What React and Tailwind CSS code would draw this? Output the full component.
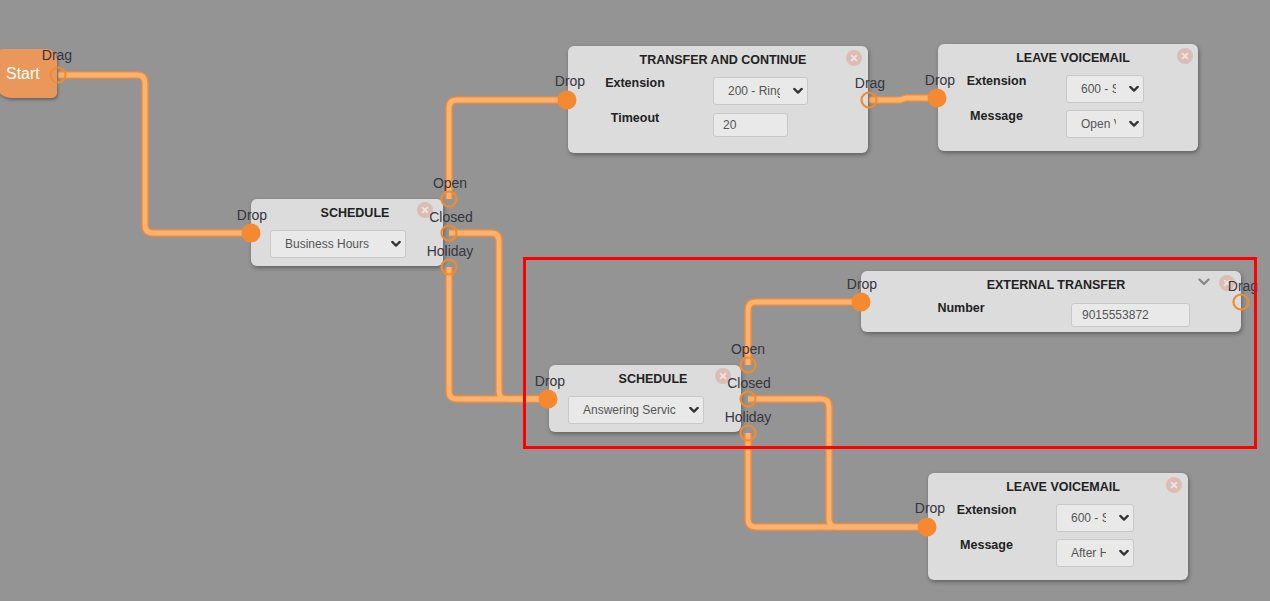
import React from "react";

function Chevron() {
  return (
    <svg className="absolute right-[4px] top-1/2 -translate-y-1/2" width="10" height="7" viewBox="0 0 10 7">
      <path d="M1.3 1.4L5 5.1L8.7 1.4" fill="none" stroke="#333" strokeWidth="2.2" strokeLinecap="round" strokeLinejoin="round" />
    </svg>
  );
}

function Select({ text, cls }) {
  return (
    <div className={"relative h-[28px] bg-[#e9e9e9] border border-[#c8c8c8] rounded-[3px] text-[12px] text-[#555] flex items-center " + cls}>
      <div className="flex-1 min-w-0 mr-[27px] overflow-hidden whitespace-nowrap pl-[14px] leading-[14px]">{text}</div>
      <Chevron />
    </div>
  );
}

function Input({ text, cls }) {
  return (
    <div className={"bg-[#e9e9e9] border border-[#c8c8c8] rounded-[3px] text-[12px] text-[#555] flex items-center pl-[9px] " + cls}>
      {text}
    </div>
  );
}

function Close({ pos }) {
  return (
    <div className={"absolute w-[16px] h-[16px] rounded-full bg-[#dbbdb4] flex items-center justify-center " + pos}>
      <svg width="8" height="8" viewBox="0 0 8 8">
        <path d="M1.6 1.6L6.4 6.4M6.4 1.6L1.6 6.4" stroke="#efe3df" strokeWidth="1.8" strokeLinecap="round" />
      </svg>
    </div>
  );
}

function Label({ children }) {
  return <div className="text-center text-[12.5px] leading-[12px] font-bold text-[#222]">{children}</div>;
}

function Title({ children, cls }) {
  return <div className={"text-center text-[12.5px] leading-[14px] font-bold text-[#222] " + cls}>{children}</div>;
}

const paths = [
  "M58 75 H137 Q145 75 145 83 V225 Q145 233 153 233 H251",
  "M449 199 V108 Q449 100 457 100 H567",
  "M449 233 H491 Q499 233 499 241 V391 Q499 399 507 399 H548",
  "M449 267 V391 Q449 399 457 399 H548",
  "M869 100 H900 L906 98 H937",
  "M748 365 V310 Q748 302 756 302 H861",
  "M748 399 H821 Q829 399 829 407 V519 Q829 527 837 527 H927",
  "M748 433 V519 Q748 527 756 527 H927",
];

const drops = [
  [251, 233],
  [567, 100],
  [937, 98],
  [548, 399],
  [861, 302],
  [927, 527],
];

const hollows = [
  [58, 75],
  [869, 100],
  [449, 199],
  [449, 233],
  [449, 267],
  [748, 365],
  [748, 399],
  [748, 433],
  [1241, 302],
];

const labels = [
  ["Drag", 57, 60],
  ["Drop", 252, 220],
  ["Open", 450, 188],
  ["Closed", 451, 222],
  ["Holiday", 450, 256],
  ["Drop", 570, 86],
  ["Drag", 870, 88],
  ["Drop", 940, 85],
  ["Drop", 550, 386],
  ["Open", 748, 354],
  ["Closed", 749, 388],
  ["Holiday", 748, 422],
  ["Drop", 862, 289],
  ["Drag", 1243, 291],
  ["Drop", 930, 513],
];

export default function App() {
  return (
    <div className="relative w-[1270px] h-[601px] overflow-hidden bg-[#949494] font-['Liberation_Sans',Arial,sans-serif]">
      {/* connectors */}
      <svg className="absolute left-0 top-0" width="1270" height="601">
        {paths.map((d, i) => (
          <path key={"o" + i} d={d} fill="none" stroke="#ee8c3b" strokeWidth="7.4" />
        ))}
        {paths.map((d, i) => (
          <path key={"i" + i} d={d} fill="none" stroke="#ffb26d" strokeWidth="4.8" />
        ))}
      </svg>

      {/* Start */}
      <div className="absolute left-[-6px] top-[49px] w-[63px] h-[49px] bg-[#e9975a] rounded-tl-[10px] rounded-tr-[10px] rounded-bl-[18px] rounded-br-[5px] shadow-[1px_2px_3px_rgba(0,0,0,0.3)] flex items-center pl-[12px] text-white text-[16px]">
        Start
      </div>

      {/* Schedule 1 */}
      <div className="absolute left-[251px] top-[199px] w-[192px] h-[67px] rounded-[6px] bg-[#dcdcdc] shadow-[1px_2px_4px_rgba(0,0,0,0.35)] flex flex-col pt-[7px]">
        <Title cls="pl-[16px]">SCHEDULE</Title>
        <div className="mt-[10px] pl-[19px]">
          <Select text="Business Hours" cls="w-[136px]" />
        </div>
        <Close pos="right-[10px] top-[3px]" />
      </div>

      {/* Transfer and continue */}
      <div className="absolute left-[568px] top-[46px] w-[300px] h-[107px] rounded-[6px] bg-[#dcdcdc] shadow-[1px_2px_4px_rgba(0,0,0,0.35)] flex flex-col pt-[7px]">
        <Title cls="pl-[10px]">TRANSFER AND CONTINUE</Title>
        <div className="mt-[10px] grid grid-cols-[134px_95px] gap-x-[11px] gap-y-[7px]">
          <Label>Extension</Label>
          <Select text="200 - Ring Group" cls="w-[95px]" />
          <Label>Timeout</Label>
          <Input text="20" cls="w-[75px] h-[24px] mt-[1px]" />
        </div>
        <Close pos="right-[6px] top-[4px]" />
      </div>

      {/* Leave voicemail 1 */}
      <div className="absolute left-[938px] top-[44px] w-[260px] h-[107px] rounded-[6px] bg-[#dcdcdc] shadow-[1px_2px_4px_rgba(0,0,0,0.35)] flex flex-col pt-[7px]">
        <Title cls="pl-[10px]">LEAVE VOICEMAIL</Title>
        <div className="mt-[10px] grid grid-cols-[117px_78px] gap-x-[11px] gap-y-[7px]">
          <Label>Extension</Label>
          <Select text="600 - Sales" cls="w-[78px]" />
          <Label>Message</Label>
          <Select text="Open Voicemail" cls="w-[78px]" />
        </div>
        <Close pos="right-[5px] top-[4px]" />
      </div>

      {/* Schedule 2 */}
      <div className="absolute left-[549px] top-[365px] w-[192px] h-[67px] rounded-[6px] bg-[#dcdcdc] shadow-[1px_2px_4px_rgba(0,0,0,0.35)] flex flex-col pt-[7px]">
        <Title cls="pl-[16px]">SCHEDULE</Title>
        <div className="mt-[10px] pl-[19px]">
          <Select text="Answering Service" cls="w-[136px]" />
        </div>
        <Close pos="right-[10px] top-[3px]" />
      </div>

      {/* External transfer */}
      <div className="absolute left-[861px] top-[271px] w-[380px] h-[61px] rounded-[6px] bg-[#dcdcdc] shadow-[1px_2px_4px_rgba(0,0,0,0.35)] flex flex-col pt-[7px]">
        <Title cls="pl-[10px]">EXTERNAL TRANSFER</Title>
        <div className="mt-[10px] grid grid-cols-[200px_119px] gap-x-[10px]">
          <Label>Number</Label>
          <Input text="9015553872" cls="w-[119px] h-[24px] mt-[1px] pl-[10px]" />
        </div>
        <svg className="absolute right-[31px] top-[7px]" width="12" height="8" viewBox="0 0 12 8">
          <path d="M1.5 1.5L6 6L10.5 1.5" fill="none" stroke="#8a8a8a" strokeWidth="2.4" strokeLinecap="round" strokeLinejoin="round" />
        </svg>
        <Close pos="right-[6px] top-[4px]" />
      </div>

      {/* Leave voicemail 2 */}
      <div className="absolute left-[928px] top-[473px] w-[260px] h-[107px] rounded-[6px] bg-[#dcdcdc] shadow-[1px_2px_4px_rgba(0,0,0,0.35)] flex flex-col pt-[7px]">
        <Title cls="pl-[10px]">LEAVE VOICEMAIL</Title>
        <div className="mt-[10px] grid grid-cols-[117px_78px] gap-x-[11px] gap-y-[7px]">
          <Label>Extension</Label>
          <Select text="600 - Sales" cls="w-[78px]" />
          <Label>Message</Label>
          <Select text="After Hours" cls="w-[78px]" />
        </div>
        <Close pos="right-[6px] top-[4px]" />
      </div>

      {/* endpoints and labels */}
      <svg className="absolute left-0 top-0" width="1270" height="601">
        {drops.map(([x, y], i) => (
          <circle key={"d" + i} cx={x} cy={y} r="9.5" fill="#f5892f" />
        ))}
        {hollows.map(([x, y], i) => (
          <circle key={"h" + i} cx={x} cy={y} r="7.5" fill="none" stroke="#f28a2e" strokeWidth="2.2" />
        ))}
        {labels.map(([t, x, y], i) => (
          <text key={"t" + i} x={x} y={y} textAnchor="middle" fontSize="14" fill="#363640">
            {t}
          </text>
        ))}
      </svg>

      {/* highlight */}
      <div className="absolute left-[523px] top-[257px] w-[734px] h-[192px] border-[3px] border-[#ff0000]" />
    </div>
  );
}
